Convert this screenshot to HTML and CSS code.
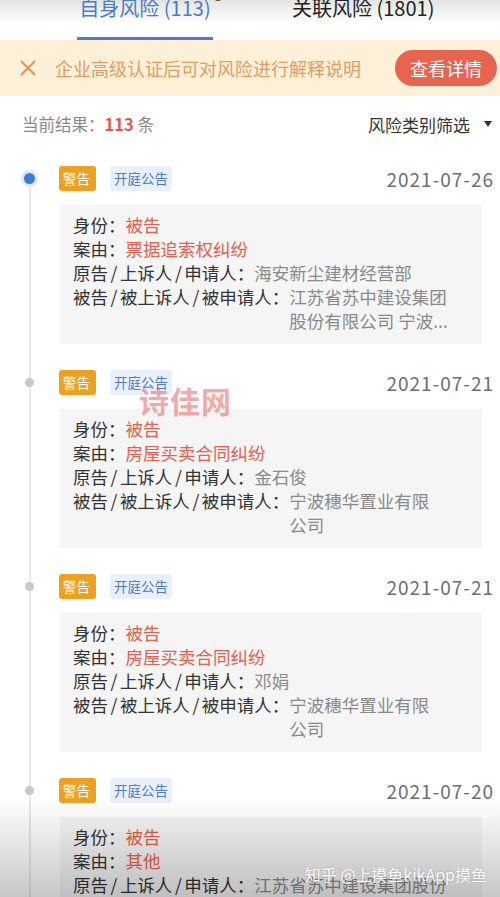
FILE: index.html
```html
<!DOCTYPE html>
<html lang="zh-CN">

<head>
  <meta charset="UTF-8">
  <meta name="viewport" content="width=device-width, initial-scale=1.0">
  <title>风险信息</title>
  <link rel="stylesheet" href="styles.css">
</head>

<body>
  <div class="page">
    <div class="tabs">
      <div class="tab active">自身风险 (113)<span class="tab-badge"></span></div>
      <div class="tab">关联风险 (1801)</div>
    </div>

    <div class="notice">
      <svg class="notice-close" width="16" height="16" viewBox="0 0 16 16">
        <path d="M1.5 1.5 L14.5 14.5 M14.5 1.5 L1.5 14.5" stroke="#ea9157" stroke-width="2" fill="none" stroke-linecap="round" />
      </svg>
      <span class="notice-text">企业高级认证后可对风险进行解释说明</span>
      <button class="notice-btn">查看详情</button>
    </div>

    <div class="summary">
      <div class="summary-count">当前结果：<b>113</b> 条</div>
      <div class="summary-filter">风险类别筛选<span class="caret"></span></div>
    </div>

    <div class="timeline">
      <div class="item current">
        <div class="item-head">
          <span class="tag tag-warn">警告</span>
          <span class="tag tag-type">开庭公告</span>
          <span class="item-date">2021-07-26</span>
        </div>
        <div class="item-body">
          <div class="row"><span class="label">身份：</span><span class="val red">被告</span></div>
          <div class="row"><span class="label">案由：</span><span class="val red">票据追索权纠纷</span></div>
          <div class="row"><span class="label">原告<i>/</i>上诉人<i>/</i>申请人：</span><span class="val">海安新尘建材经营部</span></div>
          <div class="row"><span class="label">被告<i>/</i>被上诉人<i>/</i>被申请人：</span><span class="val">江苏省苏中建设集团<br>股份有限公司 宁波...</span></div>
        </div>
      </div>

      <div class="item">
        <div class="item-head">
          <span class="tag tag-warn">警告</span>
          <span class="tag tag-type">开庭公告</span>
          <span class="item-date">2021-07-21</span>
        </div>
        <div class="item-body">
          <div class="row"><span class="label">身份：</span><span class="val red">被告</span></div>
          <div class="row"><span class="label">案由：</span><span class="val red">房屋买卖合同纠纷</span></div>
          <div class="row"><span class="label">原告<i>/</i>上诉人<i>/</i>申请人：</span><span class="val">金石俊</span></div>
          <div class="row"><span class="label">被告<i>/</i>被上诉人<i>/</i>被申请人：</span><span class="val">宁波穗华置业有限<br>公司</span></div>
        </div>
      </div>

      <div class="item">
        <div class="item-head">
          <span class="tag tag-warn">警告</span>
          <span class="tag tag-type">开庭公告</span>
          <span class="item-date">2021-07-21</span>
        </div>
        <div class="item-body">
          <div class="row"><span class="label">身份：</span><span class="val red">被告</span></div>
          <div class="row"><span class="label">案由：</span><span class="val red">房屋买卖合同纠纷</span></div>
          <div class="row"><span class="label">原告<i>/</i>上诉人<i>/</i>申请人：</span><span class="val">邓娟</span></div>
          <div class="row"><span class="label">被告<i>/</i>被上诉人<i>/</i>被申请人：</span><span class="val">宁波穗华置业有限<br>公司</span></div>
        </div>
      </div>

      <div class="item">
        <div class="item-head">
          <span class="tag tag-warn">警告</span>
          <span class="tag tag-type">开庭公告</span>
          <span class="item-date">2021-07-20</span>
        </div>
        <div class="item-body">
          <div class="row"><span class="label">身份：</span><span class="val red">被告</span></div>
          <div class="row"><span class="label">案由：</span><span class="val red">其他</span></div>
          <div class="row"><span class="label">原告<i>/</i>上诉人<i>/</i>申请人：</span><span class="val">江苏省苏中建设集团股份</span></div>
          <div class="row"><span class="label">被告<i>/</i>被上诉人<i>/</i>被申请人：</span><span class="val">宁波穗华置业有限<br>公司</span></div>
        </div>
      </div>
    </div>

    <div class="mark-site">诗佳网</div>
    <div class="shade">
      <span class="mark-zhihu">知乎 @上摸鱼kikApp摸鱼</span>
    </div>
  </div>
</body>

</html>
```

FILE: styles.css
```css
* {
  box-sizing: border-box;
}

body {
  margin: 0;
  font-family: "Noto Sans CJK SC", "Noto Sans", sans-serif;
  background-color: #fff;
  color: #333;
}

.page {
  position: relative;
  width: 500px;
  height: 897px;
  overflow: hidden;
}

/* tabs */
.tabs {
  display: flex;
  align-items: flex-start;
  height: 40px;
  padding-left: 77px;
  background: linear-gradient(#e3e3e3, #fff 24px);
}

.tab {
  position: relative;
  margin-top: -4px;
  height: 44px;
  line-height: 24px;
  font-size: 20px;
  color: #222;
  text-align: center;
  white-space: nowrap;
}

.tab.active {
  width: 136px;
  color: #4b7bc9;
  border-bottom: 3px solid #4a7bd0;
  margin-right: 79px;
}

.tab-badge {
  position: absolute;
  right: -12px;
  top: -6px;
  width: 13px;
  height: 11px;
  border-radius: 50%;
  background-color: #444;
  border-right: 3px solid #e8c25a;
}

/* notice bar */
.notice {
  display: flex;
  align-items: center;
  height: 56px;
  padding-left: 20px;
  background-color: #fdf0d8;
}

.notice-close {
  flex: none;
}

.notice-text {
  margin-left: 19px;
  font-size: 18px;
  color: #e39c62;
  white-space: nowrap;
}

.notice-btn {
  margin-left: auto;
  margin-right: 3px;
  height: 36px;
  padding: 0 15px;
  border: none;
  border-radius: 18px;
  background-color: #e8644f;
  color: #fff;
  font-family: inherit;
  font-size: 18px;
  line-height: 36px;
}

/* summary */
.summary {
  display: flex;
  align-items: center;
  justify-content: space-between;
  height: 56px;
  padding: 0 8px 0 22px;
}

.summary-count {
  font-size: 16.5px;
  color: #888;
}

.summary-count b {
  color: #e5574a;
  font-weight: bold;
}

.summary-filter {
  display: flex;
  align-items: center;
  font-size: 17px;
  color: #333;
}

.caret {
  margin-left: 14px;
  width: 0;
  height: 0;
  border-left: 4.5px solid transparent;
  border-right: 4.5px solid transparent;
  border-top: 6px solid #333;
}

/* timeline */
.timeline {
  position: relative;
  padding: 14px 6px 0 59px;
}

.timeline::before {
  content: "";
  position: absolute;
  left: 29px;
  top: 28px;
  bottom: 0;
  width: 1.5px;
  background-color: #e8e8e8;
}

.item {
  position: relative;
  padding-bottom: 26px;
}

.item::before {
  content: "";
  position: absolute;
  left: -34px;
  top: 8px;
  width: 9px;
  height: 9px;
  border-radius: 50%;
  background-color: #c8c8c8;
}

.item.current::before {
  left: -35px;
  top: 7px;
  width: 11px;
  height: 11px;
  background-color: #3f78dc;
  box-shadow: 0 0 0 3px #dde8f8;
}

.item-head {
  display: flex;
  align-items: center;
  height: 25px;
}

.tag {
  height: 25px;
  line-height: 25px;
  padding: 0 4px;
  border-radius: 3px;
  font-size: 13.5px;
}

.tag-warn {
  width: 37px;
  background-color: #f0a01f;
  color: #fff;
}

.tag-type {
  margin-left: 14px;
  background-color: #e9f0fb;
  color: #4d7ec6;
}

.item-date {
  margin-left: auto;
  font-size: 19px;
  letter-spacing: 1px;
  color: #6e6e6e;
}

.item-body {
  margin: 14px 12px 0 1px;
  padding: 8px 13px 11px 13px;
  background-color: #f5f5f5;
  font-size: 17.5px;
  line-height: 24px;
}

.row {
  display: flex;
}

.label {
  flex: none;
  color: #333;
}

.label i {
  font-style: normal;
  padding: 0 2.5px;
}

.val {
  color: #8a8a8a;
}

.val.red {
  color: #e5604d;
}

/* overlays */
.mark-site {
  position: absolute;
  left: 139px;
  top: 378px;
  font-size: 30px;
  font-weight: bold;
  letter-spacing: 1px;
  color: rgba(232, 96, 96, 0.55);
}

.shade {
  position: absolute;
  left: 0;
  right: 0;
  bottom: 0;
  height: 100px;
  background: linear-gradient(rgba(0, 0, 0, 0), rgba(0, 0, 0, 0.22));
}

.mark-zhihu {
  position: absolute;
  right: 13px;
  bottom: 11px;
  font-size: 16px;
  color: rgba(255, 255, 255, 0.95);
  text-shadow: 0 0 2px rgba(0, 0, 0, 0.2);
}
```
